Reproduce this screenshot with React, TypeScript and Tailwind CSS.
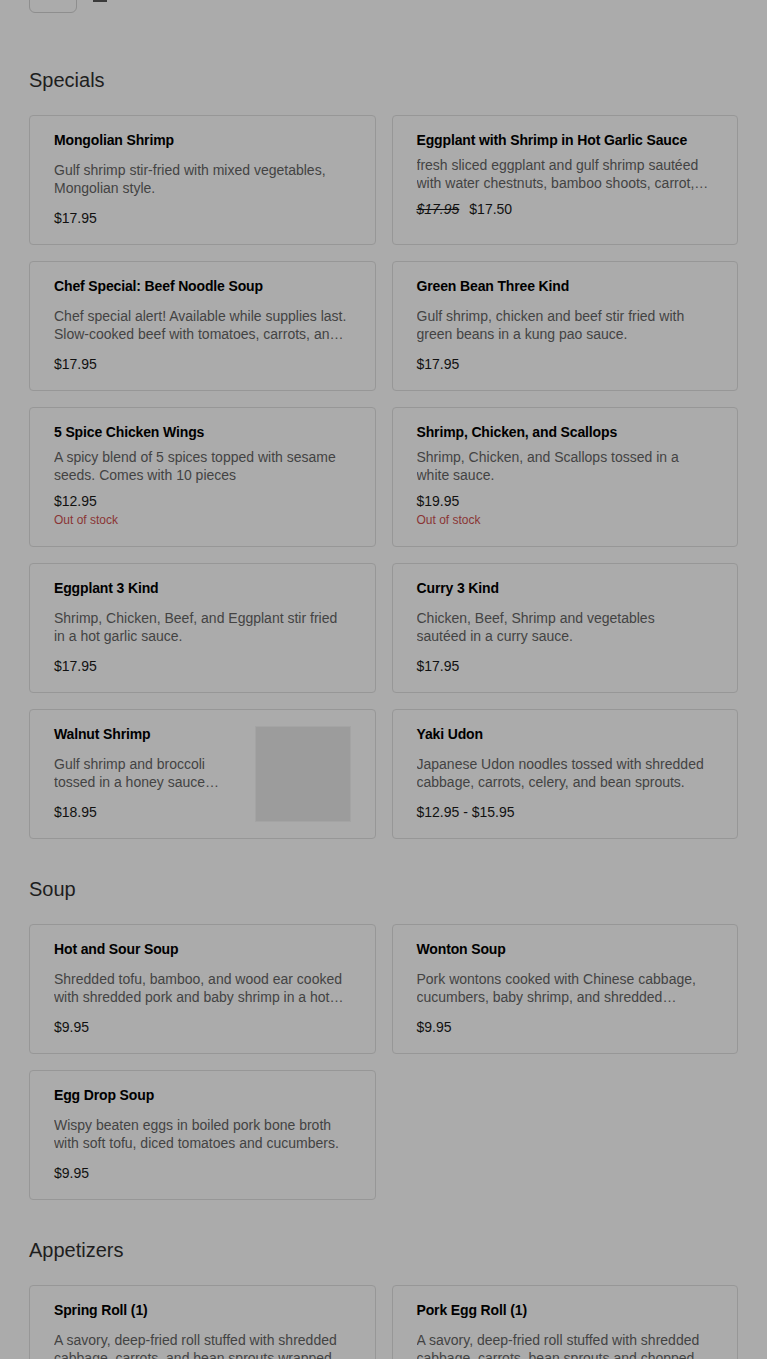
import React from 'react';
import clsx from 'clsx';

type Item = {
  name: string;
  desc: [string, string];
  price: string;
  oldPrice?: string;
  outOfStock?: boolean;
  image?: boolean;
  compact?: boolean;
};

const sections: { title: string; items: Item[] }[] = [
  {
    title: 'Specials',
    items: [
      {
        name: 'Mongolian Shrimp',
        desc: ['Gulf shrimp stir-fried with mixed vegetables,', 'Mongolian style.'],
        price: '$17.95'
      },
      {
        name: 'Eggplant with Shrimp in Hot Garlic Sauce',
        desc: [
          'fresh sliced eggplant and gulf shrimp sautéed',
          'with water chestnuts, bamboo shoots, carrot, and onions in a hot garlic sauce.'
        ],
        price: '$17.50',
        oldPrice: '$17.95',
        compact: true
      },
      {
        name: 'Chef Special: Beef Noodle Soup',
        desc: [
          'Chef special alert! Available while supplies last.',
          'Slow-cooked beef with tomatoes, carrots, and onions in a rich broth.'
        ],
        price: '$17.95'
      },
      {
        name: 'Green Bean Three Kind',
        desc: ['Gulf shrimp, chicken and beef stir fried with', 'green beans in a kung pao sauce.'],
        price: '$17.95'
      },
      {
        name: '5 Spice Chicken Wings',
        desc: ['A spicy blend of 5 spices topped with sesame', 'seeds. Comes with 10 pieces'],
        price: '$12.95',
        outOfStock: true
      },
      {
        name: 'Shrimp, Chicken, and Scallops',
        desc: ['Shrimp, Chicken, and Scallops tossed in a', 'white sauce.'],
        price: '$19.95',
        outOfStock: true
      },
      {
        name: 'Eggplant 3 Kind',
        desc: ['Shrimp, Chicken, Beef, and Eggplant stir fried', 'in a hot garlic sauce.'],
        price: '$17.95'
      },
      {
        name: 'Curry 3 Kind',
        desc: ['Chicken, Beef, Shrimp and vegetables', 'sautéed in a curry sauce.'],
        price: '$17.95'
      },
      {
        name: 'Walnut Shrimp',
        desc: ['Gulf shrimp and broccoli', 'tossed in a honey sauce…'],
        price: '$18.95',
        image: true
      },
      {
        name: 'Yaki Udon',
        desc: ['Japanese Udon noodles tossed with shredded', 'cabbage, carrots, celery, and bean sprouts.'],
        price: '$12.95 - $15.95'
      }
    ]
  },
  {
    title: 'Soup',
    items: [
      {
        name: 'Hot and Sour Soup',
        desc: [
          'Shredded tofu, bamboo, and wood ear cooked',
          'with shredded pork and baby shrimp in a hot and sour broth.'
        ],
        price: '$9.95'
      },
      {
        name: 'Wonton Soup',
        desc: [
          'Pork wontons cooked with Chinese cabbage,',
          'cucumbers, baby shrimp, and shredded chicken in a clear broth.'
        ],
        price: '$9.95'
      },
      {
        name: 'Egg Drop Soup',
        desc: ['Wispy beaten eggs in boiled pork bone broth', 'with soft tofu, diced tomatoes and cucumbers.'],
        price: '$9.95'
      }
    ]
  },
  {
    title: 'Appetizers',
    items: [
      {
        name: 'Spring Roll (1)',
        desc: [
          'A savory, deep-fried roll stuffed with shredded',
          'cabbage, carrots, and bean sprouts wrapped in a thin crispy wrapper.'
        ],
        price: '$2.50'
      },
      {
        name: 'Pork Egg Roll (1)',
        desc: [
          'A savory, deep-fried roll stuffed with shredded',
          'cabbage, carrots, bean sprouts and chopped pork in a thick wrapper.'
        ],
        price: '$2.95'
      }
    ]
  }
];

const MenuCard = ({ item }: { item: Item }) => (
  <div className="flex gap-4 rounded border border-[#979797] bg-[#ababab] px-6 py-4">
    <div className={clsx('flex min-w-0 flex-1 flex-col', !item.compact && 'min-h-[96px] justify-between')}>
      <h3 className="mb-2 text-[14px] font-bold leading-[16px] tracking-[-0.01em] text-black">{item.name}</h3>
      <p className="mb-[7px] line-clamp-2 text-[14px] leading-[18px] text-[#434343]">
        {item.desc[0]}
        <br />
        {item.desc[1]}
      </p>
      <div>
        <div className="flex items-baseline gap-[10px] text-[14px] leading-[20px] text-[#111]">
          {item.oldPrice && <span className="italic line-through">{item.oldPrice}</span>}
          <span>{item.price}</span>
        </div>
        {item.outOfStock && <p className="text-[12px] leading-[19px] text-[#8a3535]">Out of stock</p>}
      </div>
    </div>
    {item.image && <div className="h-24 w-24 shrink-0 border border-[#a4a4a4] bg-[#9c9c9c]" />}
  </div>
);

export default function App() {
  return (
    <div className="min-h-screen overflow-hidden bg-[#ababab] px-[29px] pb-10 font-['Liberation_Sans',Arial,sans-serif]">
      {/* toolbar, scrolled mostly out of view */}
      <div className="-mt-[27px] flex items-end gap-4">
        <div className="h-10 w-12 rounded-md border border-[#8e8e8e]" />
        <svg width="14" height="16" viewBox="0 0 14 16" className="mb-[11px]">
          <rect x="0" y="13" width="14" height="3" fill="#3a3a3a" />
        </svg>
      </div>

      {sections.map((section, i) => (
        <section key={section.title} className={i === 0 ? 'pt-[53px]' : 'pt-9'}>
          <h2 className="mb-[21px] text-[20px] leading-[28px] font-normal text-[#1e1e1e]">{section.title}</h2>
          <div className="grid grid-cols-2 gap-4">
            {section.items.map(item => (
              <MenuCard key={item.name} item={item} />
            ))}
          </div>
        </section>
      ))}
    </div>
  );
}
